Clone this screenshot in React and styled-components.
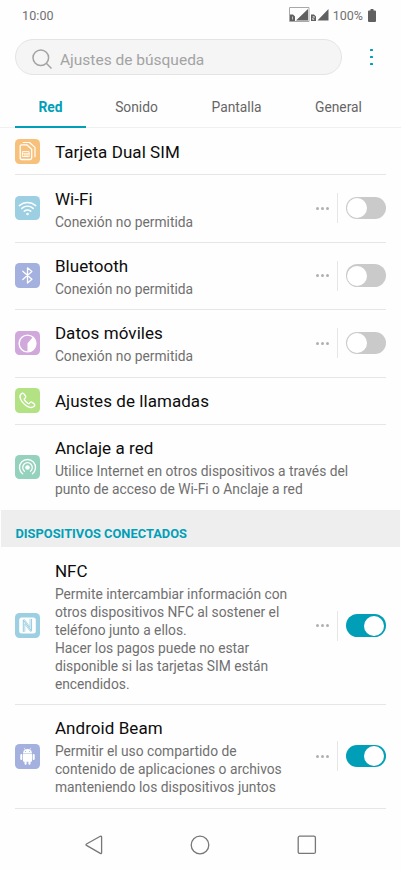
import React from 'react';
import styled, { createGlobalStyle, css } from 'styled-components';

const colors = {
  accent: '#009fb7',
  text: '#0c0c0c',
  grey: '#707070',
  line: '#e6e6e6',
  band: '#eeeeee',
};

const GlobalStyle = createGlobalStyle`
  * {
    box-sizing: border-box;
  }
  body {
    margin: 0;
    background: #fefefe;
    font-family: Roboto, sans-serif;
  }
  svg {
    display: block;
    flex-shrink: 0;
  }
`;

const Screen = styled.div`
  display: flex;
  flex-direction: column;
  width: 401px;
  height: 870px;
  overflow: hidden;
  background: #fefefe;
`;

const StatusBar = styled.header`
  display: flex;
  align-items: center;
  justify-content: space-between;
  height: 32px;
  padding: 0 25px 1.5px 22px;
  color: #707070;
  font-size: 12.5px;
`;

const Clock = styled.span`
  letter-spacing: 0.1px;
`;

const StatusIcons = styled.div`
  display: flex;
  align-items: center;
`;

const BatteryLevel = styled.span`
  margin: 0 5px 0 3px;
  font-size: 12.5px;
`;

const SearchRow = styled.div`
  display: flex;
  align-items: center;
  height: 50px;
  padding: 0 28px 0 15px;
  justify-content: space-between;
`;

const SearchField = styled.div`
  display: flex;
  align-items: center;
  width: 327px;
  height: 36px;
  padding-left: 15.5px;
  padding-top: 3px;
  border: 1px solid #e4e4e4;
  border-radius: 18px;
  background: #f5f5f5;
  color: #a3a3a3;
`;

const Placeholder = styled.span`
  margin: 2px 0 0 8.5px;
  font-size: 15.5px;
`;

const Tabs = styled.nav`
  display: flex;
  height: 46px;
  padding: 0 15px;
  border-bottom: 1px solid #f0f0f0;
`;

const Tab = styled.div`
  display: flex;
  align-items: center;
  justify-content: center;
  flex-shrink: 0;
  width: ${({ $width }) => $width}px;
  height: 46px;
  padding-top: 5px;
  border-bottom: 2px solid ${({ $active }) => ($active ? colors.accent : 'transparent')};
  color: ${({ $active }) => ($active ? colors.accent : '#666')};
  font-size: 13.8px;
  font-weight: ${({ $active }) => ($active ? 700 : 400)};
`;

const Row = styled.div`
  display: flex;
  align-items: center;
  flex-shrink: 0;
  height: ${({ $height }) => $height}px;
  margin: 0 15.5px 0 15.3px;
  padding-bottom: 1px;
  border-top: 1px solid ${({ $first }) => ($first ? 'transparent' : colors.line)};
`;

const IconTile = styled.div`
  display: flex;
  align-items: center;
  justify-content: center;
  flex-shrink: 0;
  width: 24.6px;
  height: 24.6px;
  border-radius: 4.5px;
  background: ${({ $color }) => $color};
`;

const RowText = styled.div`
  flex: 1;
  align-self: flex-start;
  padding: 12.1px 0 0 15px;
  white-space: nowrap;
`;

const Title = styled.div`
  color: ${colors.text};
  font-size: 17px;
  line-height: 23px;
  letter-spacing: 0.06px;
`;

const Description = styled.div`
  margin-top: 2px;
  color: ${colors.grey};
  font-size: 13.8px;
  line-height: 18px;
`;

const Controls = styled.div`
  display: flex;
  align-items: center;
`;

const MoreDots = styled.div`
  display: flex;
  gap: 1.9px;
  flex-direction: ${({ $vertical }) => ($vertical ? 'column' : 'row')};

  i {
    width: 3px;
    height: 3px;
    border-radius: 50%;
    background: #b0b0b0;
  }

  ${({ $vertical }) =>
    $vertical &&
    css`
      gap: 4.6px;

      i {
        width: 2.6px;
        height: 2.6px;
        border-radius: 0.5px;
        background: ${colors.accent};
      }
    `}
`;

const Separator = styled.div`
  width: 1px;
  height: 30px;
  margin: 0 8px;
  background: ${colors.line};
`;

const Switch = styled.div`
  display: flex;
  justify-content: ${({ $on }) => ($on ? 'flex-end' : 'flex-start')};
  width: 39.6px;
  height: 22.4px;
  padding: 1.2px;
  border-radius: 12px;
  background: ${({ $on }) => ($on ? colors.accent : '#cacaca')};

  &::after {
    content: '';
    width: 20px;
    height: 20px;
    border-radius: 50%;
    background: #fff;
  }
`;

const SectionHeader = styled.h2`
  display: flex;
  align-items: center;
  flex-shrink: 0;
  height: 37px;
  margin: 0 1px;
  padding: 9.5px 14px 0 14.5px;
  background: ${colors.band};
  color: ${colors.accent};
  font-size: 12.85px;
  font-weight: 700;
`;

const NavBar = styled.footer`
  display: flex;
  align-items: center;
  justify-content: space-between;
  flex: 1;
  padding: 11px 84px 0 85px;
`;

const Divider = styled.div`
  height: 1px;
  margin: 0 15.5px 0 15.3px;
  background: ${colors.line};
`;

const stroke = {
  fill: 'none',
  stroke: '#fff',
  strokeWidth: 1.3,
  strokeLinecap: 'round',
  strokeLinejoin: 'round',
};

const Glyph = ({ children }) => (
  <svg width="25" height="25" viewBox="0 0 25 25" {...stroke}>
    {children}
  </svg>
);

const SimGlyph = () => (
  <Glyph>
    <path d="M5.2 7.3q0-1.500 1.500-1.500h5l5 4.400v8.800q0 1.500-1.500 1.500h-8.500q-1.500 0-1.500-1.500z" />
    <path d="M8.300 3.500h6.200l5.500 4.900v9.300" strokeWidth="1.200" />
    <path d="M7.800 12.600h6.300v4.900H7.800zM9.900 15v2.500M12 15v2.500M7.800 14.800h6.300" strokeWidth="0.900" />
  </Glyph>
);

const WifiGlyph = () => (
  <Glyph>
    <path d="M4.300 9.600c4.800-4 11.600-4 16.400 0M6.800 12.400c3.400-2.800 8-2.800 11.400 0M9.300 15.200c2-1.500 4.400-1.500 6.400 0" strokeWidth="1.500" />
    <circle cx="12.500" cy="18" r="1.300" fill="#fff" stroke="none" />
  </Glyph>
);

const BluetoothGlyph = () => (
  <Glyph>
    <path d="M7.800 8.300l9.100 8-4.400 3.700V4.800l4.400 3.800-9.100 8" />
  </Glyph>
);

const DataGlyph = () => (
  <Glyph>
    <circle cx="12.500" cy="12.500" r="8.400" strokeWidth="1.400" />
    <path d="M12.500 12.500L17.700 6.200A7.900 7.900 0 0 1 12.500 20.400z" fill="#fff" stroke="none" />
  </Glyph>
);

const PhoneGlyph = () => (
  <Glyph>
    <path d="M6.300 5.800c.7-.8 1.800-.9 2.500-.1l1.700 2.300c.5.700.3 1.400-.2 1.900l-.9.800c-.3.400-.3.700 0 1.200.9 1.500 2.200 2.700 3.700 3.600.5.300.9.300 1.200-.1l.9-1c.5-.5 1.200-.5 1.800-.1l2.200 1.600c.8.700.7 1.700-.1 2.400-1.500 1.500-3.600 1.500-5.700.5-3.500-1.700-6.200-4.400-7.800-7.600-1-2-.8-3.900.7-5.400z" />
  </Glyph>
);

const HotspotGlyph = () => (
  <Glyph>
    <circle cx="12.500" cy="13.500" r="2.300" fill="#fff" stroke="none" />
    <path d="M9.500 17.200a4.800 4.800 0 1 1 6 0M7.600 19.800a8 8 0 1 1 9.800 0" />
  </Glyph>
);

const NfcGlyph = () => (
  <Glyph>
    <rect x="4.200" y="4.500" width="16.600" height="16" rx="2.500" fill="#fff" stroke="none" />
    <path d="M8.300 18.500V7l8.200 10.800V6.200" stroke="#9ccfe2" strokeWidth="1.100" />
    <path d="M9.800 18.500v-7.200M15 6.200v7.400M9.300 6.500l6 7.700M9.800 11l5.700 7.500" stroke="#9ccfe2" strokeWidth="0.800" />
  </Glyph>
);

const AndroidGlyph = () => (
  <Glyph>
    <g fill="#fff" stroke="none">
      <path d="M8 9.400a4.500 4.500 0 0 1 9 0z" />
      <path d="M8 10.100h9v6.600q0 1-1 1H9q-1 0-1-1z" />
      <rect x="5.300" y="10.100" width="2" height="6" rx="1" />
      <rect x="17.700" y="10.100" width="2" height="6" rx="1" />
      <rect x="9.500" y="16" width="2.100" height="4.700" rx="1" />
      <rect x="13.400" y="16" width="2.100" height="4.700" rx="1" />
    </g>
    <path d="M9.300 4.200l1 1.700M15.700 4.200l-1 1.700" strokeWidth="0.600" />
    <path d="M10.500 7.500h.1M14.500 7.500h.1" stroke="#a4b0de" strokeWidth="0.900" />
  </Glyph>
);

const SignalIcons = () => (
  <svg width="41" height="16" viewBox="0 0 41 16">
    <path d="M0.500 0.500h19.500v14H0.500z" fill="none" stroke="#a8a8a8" />
    <path d="M7 13.500L19 2v11.500zM28.500 13.500L39.500 2v11.500z" fill="#606060" />
    <path d="M1 7.500h3l2 2v4.500H1zM22 7.500h3l2 2v4.500h-5z" fill="#606060" />
    <path d="M3.500 9.500v3M23.700 9.500h1.500v1.500h-1.500v1.500h1.500" fill="none" stroke="#ddd" strokeWidth="0.800" />
  </svg>
);

const settings = [
  { title: 'Tarjeta Dual SIM', icon: SimGlyph, color: '#f8c17b', height: 46.45, first: true },
  { title: 'Wi-Fi', lines: ['Conexión no permitida'], icon: WifiGlyph, color: '#9ccfe2', height: 67.45, on: false },
  { title: 'Bluetooth', lines: ['Conexión no permitida'], icon: BluetoothGlyph, color: '#a4b0de', height: 67.4, on: false },
  { title: 'Datos móviles', lines: ['Conexión no permitida'], icon: DataGlyph, color: '#d0a8dc', height: 67.5, on: false },
  { title: 'Ajustes de llamadas', icon: PhoneGlyph, color: '#b3e284', height: 47 },
  {
    title: 'Anclaje a red',
    lines: ['Utilice Internet en otros dispositivos a través del', 'punto de acceso de Wi-Fi o Anclaje a red'],
    icon: HotspotGlyph,
    color: '#95d2bd',
    height: 86.2,
  },
];

const devices = [
  {
    title: 'NFC',
    lines: [
      'Permite intercambiar información con',
      'otros dispositivos NFC al sostener el',
      'teléfono junto a ellos.',
      'Hacer los pagos puede no estar',
      'disponible si las tarjetas SIM están',
      'encendidos.',
    ],
    icon: NfcGlyph,
    color: '#9ccfe2',
    height: 157.3,
    on: true,
    first: true,
  },
  {
    title: 'Android Beam',
    lines: ['Permitir el uso compartido de', 'contenido de aplicaciones o archivos', 'manteniendo los dispositivos juntos'],
    icon: AndroidGlyph,
    color: '#a4b0de',
    height: 104,
    on: true,
  },
];

const Dots = ({ vertical }) => (
  <MoreDots $vertical={vertical}>
    <i />
    <i />
    <i />
  </MoreDots>
);

const SettingRow = ({ title, lines, icon: Icon, color, height, on, first }) => (
  <Row $height={height} $first={first}>
    <IconTile $color={color}>
      <Icon />
    </IconTile>
    <RowText>
      <Title>{title}</Title>
      {lines && (
        <Description>
          {lines.map(line => (
            <div key={line}>{line}</div>
          ))}
        </Description>
      )}
    </RowText>
    {on !== undefined && (
      <Controls>
        <Dots />
        <Separator />
        <Switch $on={on} />
      </Controls>
    )}
  </Row>
);

const App = () => (
  <>
    <GlobalStyle />
    <Screen>
      <StatusBar>
        <Clock>10:00</Clock>
        <StatusIcons>
          <SignalIcons />
          <BatteryLevel>100%</BatteryLevel>
          <svg width="8" height="13" viewBox="0 0 8 13">
            <path d="M2.500 0h3v1.500H7q1 0 1 1V12q0 1-1 1H1q-1 0-1-1V2.500q0-1 1-1h1.500z" fill="#606060" />
          </svg>
        </StatusIcons>
      </StatusBar>
      <SearchRow>
        <SearchField>
          <svg width="20" height="20" viewBox="0 0 20 20" fill="none" stroke="#a3a3a3" strokeWidth="1.500">
            <circle cx="8.800" cy="8.800" r="7.800" />
            <path d="M14.300 14.300l5.200 5.200" />
          </svg>
          <Placeholder>Ajustes de búsqueda</Placeholder>
        </SearchField>
        <Dots vertical />
      </SearchRow>
      <Tabs>
        <Tab $active $width={71}>Red</Tab>
        <Tab $width={101}>Sonido</Tab>
        <Tab $width={99}>Pantalla</Tab>
        <Tab $width={105}>General</Tab>
      </Tabs>
      {settings.map(item => (
        <SettingRow key={item.title} {...item} />
      ))}
      <SectionHeader>DISPOSITIVOS CONECTADOS</SectionHeader>
      {devices.map(item => (
        <SettingRow key={item.title} {...item} />
      ))}
      <Divider />
      <NavBar>
        <svg width="18" height="20" viewBox="0 0 18 20" fill="none" stroke="#777" strokeWidth="1.300" strokeLinejoin="round">
          <path d="M15.300 1.300L1.500 9q-1 .7 0 1.400l13.800 8q1.300.5 1.300-1V2.200q0-1.400-1.300-.9z" />
        </svg>
        <svg width="20" height="20" viewBox="0 0 20 20" fill="none" stroke="#777" strokeWidth="1.300">
          <circle cx="10" cy="10" r="8.800" />
        </svg>
        <svg width="20" height="20" viewBox="0 0 20 20" fill="none" stroke="#777" strokeWidth="1.300">
          <rect x="1.200" y="1.200" width="17.200" height="17.200" rx="1.500" />
        </svg>
      </NavBar>
    </Screen>
  </>
);

export default App;
